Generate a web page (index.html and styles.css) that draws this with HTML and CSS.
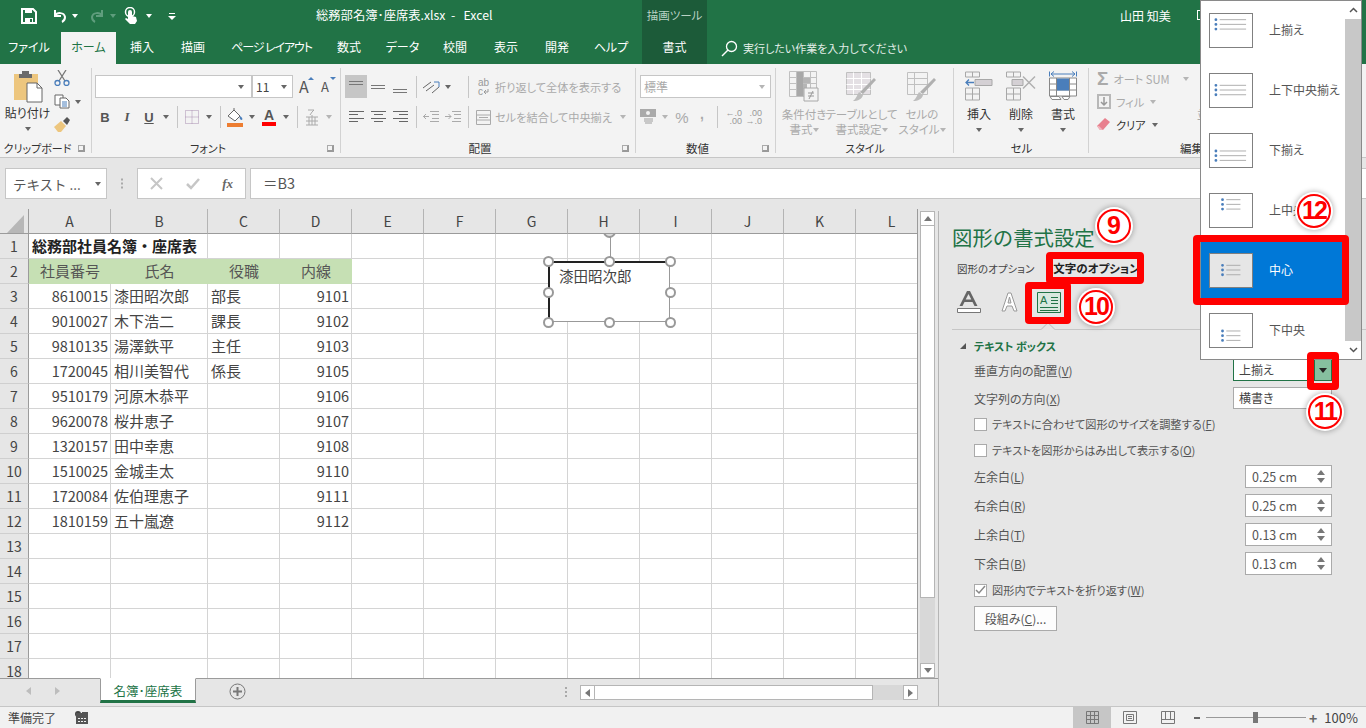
FILE: index.html
```html
<!DOCTYPE html>
<html lang="ja">
<head>
  <meta charset="UTF-8" />
  <title>総務部名簿・座席表.xlsx - Excel</title>
  <link rel="stylesheet" href="styles.css">
</head>
<body>
<div class="app">

  <div class="titlebar">
    <div class="qat">
      <svg class="q-save" width="16" height="16" viewBox="0 0 16 16"><path d="M1 1h11l3 3v11H1z" fill="none" stroke="#fff" stroke-width="2"/><path d="M4 1h7v4H4zM4 10h8v5H4z" fill="#fff"/><path d="M9 11h2v3H9z" fill="#217346"/></svg>
      <svg class="q-undo" width="16" height="16" viewBox="0 0 16 16"><path d="M4 2v6h6M4 8c2-4 9-4 10 1 0 2-1 4-3 5" fill="none" stroke="#fff" stroke-width="2"/></svg>
      <span class="caret white q-c1"></span>
      <svg class="q-redo" width="16" height="16" viewBox="0 0 16 16"><path d="M12 2v6H6M12 8c-2-4-9-4-10 1 0 2 1 4 3 5" fill="none" stroke="#5f9d7d" stroke-width="2"/></svg>
      <span class="caret dim q-c2"></span>
      <svg class="q-hand" width="14" height="18" viewBox="0 0 14 18"><circle cx="6" cy="5" r="4.5" fill="none" stroke="#fff" stroke-width="1.5"/><path d="M4 5a2 2 0 0 1 4 0v4l4 1 1 4-2 3H6l-5-5 1-1 2 1z" fill="#fff"/></svg>
      <span class="caret white q-c3"></span>
      <svg class="q-more" width="8" height="8" viewBox="0 0 8 8"><path d="M1 1h6v1H1zM0 4h8L4 8z" fill="#fff"/></svg>
    </div>
    <div class="doc-title">総務部名簿･座席表.xlsx&nbsp;&nbsp;-&nbsp;&nbsp;&nbsp;Excel</div>
    <div class="tool-tag">描画ツール</div>
    <div class="user">山田 知美</div>
    <div class="acct"></div>
  </div>

  <div class="tabs">
    <span class="tab file">ファイル</span>
    <span class="tab on">ホーム</span>
    <span class="tab">挿入</span>
    <span class="tab">描画</span>
    <span class="tab narrow">ページ レイアウト</span>
    <span class="tab">数式</span>
    <span class="tab">データ</span>
    <span class="tab">校閲</span>
    <span class="tab">表示</span>
    <span class="tab">開発</span>
    <span class="tab">ヘルプ</span>
    <span class="tab ctx">書式</span>
    <span class="tell">
      <svg width="17" height="17" viewBox="0 0 17 17"><circle cx="10.500" cy="6.500" r="5" fill="none" stroke="#fff" stroke-width="1.3"/><path d="M7 10l-6 6" stroke="#fff" stroke-width="1.5"/></svg>
      実行したい作業を入力してください
    </span>
  </div>

  <div class="ribbon">
    <section class="group g-clip">
      <div class="g-body clip-body">
        <div class="paste">
          <svg width="30" height="33" viewBox="0 0 30 33"><path d="M1 4h24v26H1z" fill="#edc67e"/><path d="M6 4h3V1h7v3h3v4H6z" fill="#6b6b6b"/><path d="M14 13h10l5 5v14H14z" fill="#fff" stroke="#666"/><path d="M24 13v5h5" fill="none" stroke="#666"/></svg>
          <span class="paste-label">貼り付け</span>
          <span class="caret"></span>
        </div>
        <div class="clip-col">
          <svg width="16" height="16" viewBox="0 0 16 16"><path d="M4 0l7 11M12 0L5 11" stroke="#777" stroke-width="1.300" fill="none"/><circle cx="3.500" cy="13" r="2.500" fill="none" stroke="#4a7ebb" stroke-width="1.300"/><circle cx="12.500" cy="13" r="2.500" fill="none" stroke="#4a7ebb" stroke-width="1.300"/></svg>
          <div class="clip-copy">
            <svg width="16" height="15" viewBox="0 0 16 15"><path d="M1 1h8v10H1z" fill="#fff" stroke="#666"/><path d="M6 4h6l3 3v7H6z" fill="#fff" stroke="#666"/><path d="M8 8h5M8 10h5M8 12h5" stroke="#4a7ebb"/></svg>
            <span class="caret"></span>
          </div>
          <svg width="16" height="15" viewBox="0 0 16 15"><path d="M0 10l7-6 5 5-5 6H4z" fill="#edc67e"/><path d="M9 4l4-4 3 3-3 5z" fill="#555"/></svg>
        </div>
      </div>
      <div class="g-label lx">クリップボード<span class="launcher"></span></div>
    </section>

    <section class="group g-font">
      <div class="g-body">
        <div class="row top">
          <div class="combo font-name"><span class="caret"></span></div>
          <div class="combo font-size"><span>11</span><span class="caret"></span></div>
          <span class="grow-a">A<i class="tri up"></i></span>
          <span class="grow-a small">A<i class="tri down"></i></span>
        </div>
        <div class="row second">
          <span class="tool b">B</span>
          <span class="tool i">I</span>
          <span class="tool u">U</span>
          <span class="slot"><span class="caret"></span></span>
          <span class="sep"></span>
          <span class="tool"><svg width="14" height="14" viewBox="0 0 14 14"><path d="M.5.500h13v13H.5zM7 .5v13M.5 7h13" fill="none" stroke="#a98fb0" stroke-dasharray="1 1"/></svg></span>
          <span class="slot"><span class="caret"></span></span>
          <span class="sep"></span>
          <span class="tool"><svg width="18" height="19" viewBox="0 0 18 19"><path d="M2 8l6-6 6 6-5 5z" fill="#fff" stroke="#666"/><path d="M8 2V0" stroke="#666"/><path d="M14 8c2 1 3 3 2 4-2 0-3-2-2-4z" fill="#4a7ebb"/><path d="M1 15h16v4H1z" fill="#ed7d31"/></svg></span>
          <span class="slot"><span class="caret"></span></span>
          <span class="tool"><span class="font-color">A</span></span>
          <span class="slot"><span class="caret"></span></span>
          <span class="sep"></span>
          <span class="tool"><svg width="14" height="17" viewBox="0 0 14 17"><path d="M3 1h6L7 3M7 3L5 6" stroke="#aaa" fill="none"/><path d="M1 8h12M1 12h12M1 16h12M4 8v8M10 8v8M7 6v10" stroke="#aaa" fill="none"/></svg></span>
          <span class="slot"><span class="caret off"></span></span>
        </div>
      </div>
      <div class="g-label lx">フォント<span class="launcher"></span></div>
    </section>

    <section class="group g-align">
      <div class="g-body">
        <div class="row top">
          <div class="cluster">
            <span class="tool active"><svg width="14" height="14" viewBox="0 0 14 14"><path d="M0 1.500h14M0 4.500h14" stroke="#777"/></svg></span>
            <span class="tool"><svg width="14" height="14" viewBox="0 0 14 14"><path d="M0 5.500h14M0 8.500h14" stroke="#777"/></svg></span>
            <span class="tool"><svg width="14" height="14" viewBox="0 0 14 14"><path d="M0 9.500h14M0 12.500h14" stroke="#777"/></svg></span>
            <span class="sep"></span>
            <span class="tool"><svg width="18" height="14" viewBox="0 0 18 14"><path d="M1 8l8-6M4 11l8-6M10 13l7-6" stroke="#666" fill="none"/><path d="M12 2h5v5" stroke="#4a7ebb" fill="none"/></svg></span>
            <span class="slot"><span class="caret"></span></span>
          </div>
          <span class="sep"></span>
          <span class="textbtn"><span class="wrap-ico">ab<br>c<svg width="6" height="6" viewBox="0 0 6 6"><path d="M5 0v3H1M3 1L1 3l2 2" fill="none" stroke="#999"/></svg></span>折り返して全体を表示する</span>
        </div>
        <div class="row second">
          <div class="cluster">
            <span class="tool"><svg width="15" height="12" viewBox="0 0 15 12"><path d="M0 .5h15M0 3.500h9M0 7.500h15M0 10.500h9" stroke="#666"/></svg></span>
            <span class="tool"><svg width="15" height="12" viewBox="0 0 15 12"><path d="M0 .5h15M3 3.500h9M0 7.500h15M3 10.500h9" stroke="#666"/></svg></span>
            <span class="tool"><svg width="15" height="12" viewBox="0 0 15 12"><path d="M0 .5h15M6 3.500h9M0 7.500h15M6 10.500h9" stroke="#666"/></svg></span>
            <span class="sep"></span>
            <span class="tool"><svg width="16" height="12" viewBox="0 0 16 12"><path d="M7 .5h9M9 3.500h7M9 7.500h7M7 10.500h9" stroke="#aaa"/><path d="M6 5.500H0M3 3L.5 5.500 3 8" fill="none" stroke="#aaa"/></svg></span>
            <span class="tool"><svg width="16" height="12" viewBox="0 0 16 12"><path d="M7 .5h9M9 3.500h7M9 7.500h7M7 10.500h9" stroke="#aaa"/><path d="M0 5.500h6M3.500 3L6 5.500 3.500 8" fill="none" stroke="#aaa"/></svg></span>
          </div>
          <span class="sep"></span>
          <span class="textbtn merge"><svg width="15" height="15" viewBox="0 0 15 15"><path d="M.5.500h14v14H.5zM.5 5h14M.5 10h14" fill="#f3f3f3" stroke="#aaa"/><path d="M3 7.500h9" stroke="#aaa"/></svg>セルを結合して中央揃え<span class="caret off"></span></span>
        </div>
      </div>
      <div class="g-label lx">配置<span class="launcher"></span></div>
    </section>

    <section class="group g-num">
      <div class="g-body">
        <div class="row top">
          <div class="combo num-format">標準<span class="caret off"></span></div>
        </div>
        <div class="row second">
          <span class="tool money"><svg width="16" height="16" viewBox="0 0 16 16"><path d="M0 0h16v8H0z" fill="#aaa"/><circle cx="8" cy="4" r="2" fill="#f3f3f3"/><path d="M4 10h9M4 12h9M5 14h7" stroke="#bbb" stroke-width="1.500"/></svg></span>
          <span class="slot"><span class="caret off"></span></span>
          <span class="tool pct">%</span>
          <span class="tool comma">,</span>
          <span class="sep"></span>
          <span class="tool dec">←.0<br>.00</span>
          <span class="tool dec">.00<br>→.0</span>
        </div>
      </div>
      <div class="g-label lx">数値<span class="launcher"></span></div>
    </section>

    <section class="group g-style">
      <div class="g-body bigs">
        <div class="big w56">
          <svg width="30" height="31" viewBox="0 0 30 31"><path d="M.5.500h27v25H.5zM.5 6.500h27M.5 12.500h27M.5 18.500h27M7.500.5v25M14.500.5v25M21.500.5v25" fill="#f3f3f3" stroke="#c0c0c0"/><path d="M8 1h6v24H8z" fill="#a8a8a8"/><path d="M14 7h7v5h-7zM14 13h4v5h-4z" fill="#b5b5b5"/><path d="M15 17h14v13H15z" fill="#f3f3f3" stroke="#a8a8a8"/><path d="M19 22h6M19 25h6M24 20l-4 8" stroke="#999" fill="none"/></svg>
          <span class="big-text off">条件付き<br>書式<i class="caret off"></i></span>
        </div>
        <div class="big w59">
          <svg width="31" height="31" viewBox="0 0 31 31"><path d="M.5 1.500h24v22H.5z" fill="#e4e0e4" stroke="#c0c0c0"/><path d="M.5 7.500h24M.5 13.500h24M.5 18.500h24M7.500 1.500v22M15.500 1.500v22" stroke="#fff"/><path d="M30 9L17 23l-3-2L28 7z" fill="#b0b0b0"/><path d="M13 21l4 3c-1 4-5 6-10 6 3-2 4-6 6-9z" fill="#bdbdbd"/></svg>
          <span class="big-text off">テーブルとして<br>書式設定<i class="caret off"></i></span>
        </div>
        <div class="big w62">
          <svg width="30" height="31" viewBox="0 0 30 31"><path d="M.5 1.500h20v22H.5zM.5 7.500h20M.5 13.500h20M7.500 1.500v22" fill="#f3f3f3" stroke="#c0c0c0"/><path d="M29 9L16 23l-3-2L27 7z" fill="#b0b0b0"/><path d="M12 21l4 3c-1 4-5 6-10 6 3-2 4-6 6-9z" fill="#bdbdbd"/></svg>
          <span class="big-text off">セルの<br>スタイル<i class="caret off"></i></span>
        </div>
      </div>
      <div class="g-label">スタイル</div>
    </section>

    <section class="group g-cell">
      <div class="g-body bigs">
        <div class="big w42">
          <svg width="28" height="30" viewBox="0 0 28 30"><path d="M.5.500h14v5H.5zM7.500.5v5M.5 16.500h14v12H.5zM.5 22.500h14M7.500 16.500v12" fill="none" stroke="#a8a8a8"/><path d="M10 8h17v6H10z" fill="#d4d0d4" stroke="#a8a8a8"/><path d="M9 11H1M4 8l-3 3 3 3" fill="none" stroke="#4a7ebb" stroke-width="1.300"/></svg>
          <span class="big-text">挿入<br><i class="caret"></i></span>
        </div>
        <div class="big w42">
          <svg width="30" height="30" viewBox="0 0 30 30"><path d="M.5.500h14v5H.5zM7.500.5v5M.5 16.500h14v12H.5zM.5 22.500h14M7.500 16.500v12" fill="none" stroke="#a8a8a8"/><path d="M6 8h11v6H6z" fill="#d4d0d4" stroke="#a8a8a8"/><path d="M17 5l12 12M29 5L17 17" stroke="#b0b0b0" stroke-width="1.500"/></svg>
          <span class="big-text">削除<br><i class="caret"></i></span>
        </div>
        <div class="big w42">
          <svg width="28" height="30" viewBox="0 0 28 30"><path d="M.5 0v5M27.500 0v5M2 2.500h24M5 0L2 2.500 5 5M23 0l3 2.500L23 5" fill="none" stroke="#4a7ebb"/><path d="M.5 6.500h27v18H.5zM.5 12.500h27M.5 18.500h27M7.500 6.500v18M20.500 6.500v18" fill="#fff" stroke="#888"/><path d="M8 7h12v12H8z" fill="#4a7ebb"/><path d="M1 25h9l2 3H3zM13 25h8l-2 3h-4z" fill="#fff" stroke="#888"/></svg>
          <span class="big-text">書式<br><i class="caret"></i></span>
        </div>
      </div>
      <div class="g-label">セル</div>
    </section>

    <section class="group g-edit">
      <div class="g-body edit-body">
        <div class="edit-col">
          <div class="edit-row off sum"><span class="sigma">Σ</span>オート SUM<span class="caret off"></span></div>
          <div class="edit-row off"><svg width="14" height="15" viewBox="0 0 14 15"><path d="M0 0h14v15H0z" fill="#b8b8b8"/><path d="M2 2h10v11H2z" fill="#f3f3f3"/><path d="M7 3v8M4 8l3 3 3-3" fill="none" stroke="#999" stroke-width="1.500"/></svg>フィル<span class="caret off"></span></div>
          <div class="edit-row"><svg width="14" height="13" viewBox="0 0 14 13"><path d="M0 8l8-8 5 4-7 8H3z" fill="#e8808e"/><path d="M3 12h3L2 8 0 8z" fill="#f2b5bd"/></svg>クリア<span class="caret"></span></div>
        </div>
        <span class="big-text off stub">並べ替えと</span>
      </div>
      <div class="g-label left">編集</div>
    </section>
  </div>

  <div class="formula">
    <div class="namebox">テキスト ...<span class="caret"></span></div>
    <div class="grip"></div>
    <div class="fx-box">
      <svg width="13" height="13" viewBox="0 0 13 13"><path d="M1 1l11 11M12 1L1 12" stroke="#c6c6c6" stroke-width="2"/></svg>
      <svg width="14" height="12" viewBox="0 0 14 12"><path d="M1 6l4 4 8-9" fill="none" stroke="#c6c6c6" stroke-width="2.500"/></svg>
      <span class="fx">fx</span>
    </div>
    <div class="formula-input">＝B3</div>
  </div>

  <div class="work">
    <div class="sheet">
      <div class="sheet-main">
        <div class="grid">
          <table class="cells">
            <colgroup><col class="c-head"><col class="c-a"><col class="c-b"><col class="c-n"><col class="c-n"><col class="c-n"><col class="c-n"><col class="c-n"><col class="c-n"><col class="c-n"><col class="c-n"><col class="c-n"><col class="c-n"></colgroup>
            <thead>
              <tr><th class="corner"><svg width="18" height="18" viewBox="0 0 18 18"><path d="M17 0v18H0z" fill="#b7b7b7"/></svg></th><th>A</th><th>B</th><th>C</th><th>D</th><th>E</th><th>F</th><th>G</th><th>H</th><th>I</th><th>J</th><th>K</th><th>L</th></tr>
            </thead>
            <tbody>
              <tr><th>1</th><td colspan="2" class="title-cell">総務部社員名簿・座席表</td><td></td><td></td><td></td><td></td><td></td><td></td><td></td><td></td><td></td><td></td></tr>
              <tr><th>2</th><td class="hd">社員番号</td><td class="hd">氏名</td><td class="hd">役職</td><td class="hd">内線</td><td></td><td></td><td></td><td></td><td></td><td></td><td></td><td></td></tr>
              <tr><th>3</th><td class="num">8610015</td><td>漆田昭次郎</td><td>部長</td><td class="num">9101</td><td></td><td></td><td></td><td></td><td></td><td></td><td></td><td></td></tr>
              <tr><th>4</th><td class="num">9010027</td><td>木下浩二</td><td>課長</td><td class="num">9102</td><td></td><td></td><td></td><td></td><td></td><td></td><td></td><td></td></tr>
              <tr><th>5</th><td class="num">9810135</td><td>湯澤鉄平</td><td>主任</td><td class="num">9103</td><td></td><td></td><td></td><td></td><td></td><td></td><td></td><td></td></tr>
              <tr><th>6</th><td class="num">1720045</td><td>相川美智代</td><td>係長</td><td class="num">9105</td><td></td><td></td><td></td><td></td><td></td><td></td><td></td><td></td></tr>
              <tr><th>7</th><td class="num">9510179</td><td>河原木恭平</td><td></td><td class="num">9106</td><td></td><td></td><td></td><td></td><td></td><td></td><td></td><td></td></tr>
              <tr><th>8</th><td class="num">9620078</td><td>桜井恵子</td><td></td><td class="num">9107</td><td></td><td></td><td></td><td></td><td></td><td></td><td></td><td></td></tr>
              <tr><th>9</th><td class="num">1320157</td><td>田中幸恵</td><td></td><td class="num">9108</td><td></td><td></td><td></td><td></td><td></td><td></td><td></td><td></td></tr>
              <tr><th>10</th><td class="num">1510025</td><td>金城圭太</td><td></td><td class="num">9110</td><td></td><td></td><td></td><td></td><td></td><td></td><td></td><td></td></tr>
              <tr><th>11</th><td class="num">1720084</td><td>佐伯理恵子</td><td></td><td class="num">9111</td><td></td><td></td><td></td><td></td><td></td><td></td><td></td><td></td></tr>
              <tr><th>12</th><td class="num">1810159</td><td>五十嵐遼</td><td></td><td class="num">9112</td><td></td><td></td><td></td><td></td><td></td><td></td><td></td><td></td></tr>
              <tr><th>13</th><td></td><td></td><td></td><td></td><td></td><td></td><td></td><td></td><td></td><td></td><td></td><td></td></tr>
              <tr><th>14</th><td></td><td></td><td></td><td></td><td></td><td></td><td></td><td></td><td></td><td></td><td></td><td></td></tr>
              <tr><th>15</th><td></td><td></td><td></td><td></td><td></td><td></td><td></td><td></td><td></td><td></td><td></td><td></td></tr>
              <tr><th>16</th><td></td><td></td><td></td><td></td><td></td><td></td><td></td><td></td><td></td><td></td><td></td><td></td></tr>
              <tr><th>17</th><td></td><td></td><td></td><td></td><td></td><td></td><td></td><td></td><td></td><td></td><td></td><td></td></tr>
              <tr><th>18</th><td></td><td></td><td></td><td></td><td></td><td></td><td></td><td></td><td></td><td></td><td></td><td></td></tr>
            </tbody>
          </table>
          <div class="shape-layer">
            <div class="shape">
              <span class="shape-text">漆田昭次郎</span>
              <span class="rot-line"></span>
              <i class="h rot"></i>
              <i class="h tl"></i><i class="h tc"></i><i class="h tr"></i>
              <i class="h ml"></i><i class="h mr"></i>
              <i class="h bl"></i><i class="h bc"></i><i class="h br"></i>
            </div>
          </div>
        </div>
        <div class="vscroll">
          <span class="sb-btn"><i class="tri up grey"></i></span>
          <span class="sb-thumb"></span>
          <span class="sb-track"></span>
          <span class="sb-btn"><i class="tri down grey"></i></span>
        </div>
      </div>
      <div class="sheet-tabs">
        <div class="tab-nav"><i class="tri left pale"></i><i class="tri right pale"></i></div>
        <div class="sheet-tab">名簿･座席表</div>
        <svg class="add-sheet" width="17" height="17" viewBox="0 0 17 17"><circle cx="8.500" cy="8.500" r="7.500" fill="none" stroke="#777"/><path d="M8.500 4v9M4 8.500h9" stroke="#777" stroke-width="2"/></svg>
        <div class="grip small"></div>
        <div class="hscroll">
          <span class="sb-btn"><i class="tri left grey"></i></span>
          <span class="hs-thumb"></span>
          <span class="hs-track"></span>
          <span class="sb-btn"><i class="tri right grey"></i></span>
        </div>
      </div>
    </div>

    <aside class="panel">
      <h2 class="panel-title">図形の書式設定</h2>
      <div class="panel-tabs"><span>図形のオプション</span><strong>文字のオプション</strong></div>
      <div class="panel-icons">
        <svg width="24" height="22" viewBox="0 0 24 22"><path d="M2.500 15L10 0h3l7.500 15h-3l-2-4H7.500l-2 4zM8.700 8.500h5.600L11.500 3z" fill="#666"/><path d="M.5 17.500h23v4H.5z" fill="#fff" stroke="#777"/></svg>
        <svg class="ic-outline" width="17" height="22" viewBox="0 0 17 22"><path d="M1 20L7 2h3l6 18h-3l-2-5H6l-2 5zM7 12h3L8.500 6z" fill="#fff" stroke="#999"/></svg>
        <svg class="ic-box" width="24" height="21" viewBox="0 0 24 21"><path d="M.5.500h23v20H.5z" fill="#d9e8de" stroke="#217346"/><path d="M3 18.500h18M3 15.500h18M14 5.500h7M14 8.500h7M14 11.500h7" stroke="#217346"/><text x="3" y="12" class="ic-a">A</text></svg>
      </div>
      <div class="panel-rule"><span class="notch"></span></div>
      <div class="section-head"><i class="corner-tri"></i>テキスト ボックス</div>

      <div class="field">
        <label>垂直方向の配置(<u>V</u>)</label>
        <div class="pick open">上揃え<span class="pick-btn"><i class="tri down dark"></i></span></div>
      </div>
      <div class="field">
        <label>文字列の方向(<u>X</u>)</label>
        <div class="pick">横書き</div>
      </div>
      <div class="check"><span class="box"></span>テキストに合わせて図形のサイズを調整する(<u>F</u>)</div>
      <div class="check"><span class="box"></span>テキストを図形からはみ出して表示する(<u>O</u>)</div>
      <div class="field spin-row first"><label>左余白(<u>L</u>)</label><div class="spin">0.25 cm<span class="spin-btn"><i class="tri up grey"></i><i class="tri down grey"></i></span></div></div>
      <div class="field spin-row"><label>右余白(<u>R</u>)</label><div class="spin">0.25 cm<span class="spin-btn"><i class="tri up grey"></i><i class="tri down grey"></i></span></div></div>
      <div class="field spin-row"><label>上余白(<u>T</u>)</label><div class="spin">0.13 cm<span class="spin-btn"><i class="tri up grey"></i><i class="tri down grey"></i></span></div></div>
      <div class="field spin-row"><label>下余白(<u>B</u>)</label><div class="spin">0.13 cm<span class="spin-btn"><i class="tri up grey"></i><i class="tri down grey"></i></span></div></div>
      <div class="check"><span class="box"><svg width="11" height="10" viewBox="0 0 11 10"><path d="M1 5l3 3 6-7" fill="none" stroke="#888" stroke-width="1.500"/></svg></span>図形内でテキストを折り返す(<u>W</u>)</div>
      <button class="columns-btn">段組み(<u>C</u>)...</button>
    </aside>
  </div>

  <div class="statusbar">
    <span class="ready">準備完了</span>
    <svg class="macro" width="14" height="13" viewBox="0 0 14 13"><circle cx="3" cy="3" r="3" fill="#444"/><path d="M1 5h12V1H7v1H1zM1 5v8h12V5z" fill="#555"/><path d="M3 7h2v1H3zM6 7h2v1H6zM9 7h2v1H9zM3 10h2v1H3zM6 10h2v1H6zM9 10h2v1H9z" fill="#f1f1f1"/></svg>
    <div class="views">
      <span class="view on"><svg width="13" height="13" viewBox="0 0 13 13"><path d="M.5.500h12v12H.5zM.5 4.500h12M.5 8.500h12M4.500.5v12M8.500.5v12" fill="none" stroke="#777"/></svg></span>
      <span class="view"><svg width="14" height="13" viewBox="0 0 14 13"><path d="M.5.500h13v12H.5zM3.500 3.500h7v6h-7zM5 5.500h4M5 7.500h4" fill="none" stroke="#777"/></svg></span>
      <span class="view"><svg width="14" height="13" viewBox="0 0 14 13"><path d="M.5.500h13v12H.5zM.5 8.500h13M4.500.5v8M9.500.5v8" fill="none" stroke="#777"/></svg></span>
    </div>
    <div class="zoom-ctl">
      <span class="zoom-minus"></span>
      <span class="zoom-track"><i class="zoom-thumb"></i></span>
      <span class="zoom-plus">+</span>
      <span class="zoom-val">100%</span>
    </div>
  </div>

  <!-- dropdown and the red call-outs lie over the window -->
  <div class="dropdown">
    <ul class="dd-list">
      <li><svg class="dd-ico" width="44" height="35" viewBox="0 0 44 35"><use href="#lines-wide" y="6"/></svg>上揃え</li>
      <li><svg class="dd-ico" width="44" height="35" viewBox="0 0 44 35"><use href="#lines-wide" y="12"/></svg>上下中央揃え</li>
      <li><svg class="dd-ico" width="44" height="35" viewBox="0 0 44 35"><use href="#lines-wide" y="18"/></svg>下揃え</li>
      <li><svg class="dd-ico" width="44" height="35" viewBox="0 0 44 35"><use href="#lines-narrow" y="6"/></svg>上中央</li>
      <li class="sel"><svg class="dd-ico" width="44" height="35" viewBox="0 0 44 35"><use href="#lines-narrow" y="12"/></svg>中心</li>
      <li><svg class="dd-ico" width="44" height="35" viewBox="0 0 44 35"><use href="#lines-narrow" y="18"/></svg>下中央</li>
    </ul>
    <div class="dd-scroll">
      <span class="dd-btn"><svg width="9" height="6" viewBox="0 0 9 6"><path d="M1 5l3.500-3.500L8 5" fill="none" stroke="#555" stroke-width="1.500"/></svg></span>
      <span class="dd-thumb"></span>
      <span class="dd-btn"><svg width="9" height="6" viewBox="0 0 9 6"><path d="M1 1l3.500 3.500L8 1" fill="none" stroke="#555" stroke-width="1.500"/></svg></span>
    </div>
  </div>
  <svg class="defs" width="0" height="0">
    <g id="lines-wide"><path d="M6 0v.01M6 5v.01M6 10v.01" stroke="#4a7ebb" stroke-width="3" stroke-linecap="round"/><path d="M10 0h28M10 5h28M10 10h28" stroke="#aaa"/></g>
    <g id="lines-narrow"><path d="M13 0v.01M13 5v.01M13 10v.01" stroke="#4a7ebb" stroke-width="3" stroke-linecap="round"/><path d="M17 0h15M17 5h15M17 10h15" stroke="#aaa"/></g>
  </svg>

  <span class="mark m-opt"></span>
  <span class="mark m-ico"></span>
  <span class="mark m-btn"></span>
  <span class="mark m-sel"></span>
  <span class="num-badge n9">9</span>
  <span class="num-badge n10">10</span>
  <span class="num-badge n11">11</span>
  <span class="num-badge n12">12</span>
</div>
</body>
</html>
```

FILE: styles.css
```css
* { box-sizing: border-box; }
html, body { margin: 0; height: 100%; overflow: hidden; }
body {
  font-family: "Noto Sans CJK JP", "Noto Sans", sans-serif;
  font-size: 12px;
  font-feature-settings: "palt";
  color: #444;
  background: #e6e6e6;
}
.app {
  position: relative;
  width: 1366px;
  height: 728px;
  display: flex;
  flex-direction: column;
  overflow: hidden;
}

/* small shared bits */
.caret {
  display: inline-block;
  width: 0;
  height: 0;
  border: 3.5px solid transparent;
  border-top: 4px solid #666;
  border-bottom: 0;
}
.caret.off { border-top-color: #b5b5b5; }
.caret.white { border-top-color: #fff; }
.caret.dim { border-top-color: #5f9d7d; }
.tri { display: block; width: 0; height: 0; border: 4px solid transparent; }
.tri.up { border-top: 0; border-bottom: 5px solid #4a7ebb; }
.tri.down { border-bottom: 0; border-top: 5px solid #4a7ebb; }
.tri.left { border-left: 0; border-right: 5px solid #777; }
.tri.right { border-right: 0; border-left: 5px solid #777; }
.tri.grey.up { border-bottom-color: #777; }
.tri.grey.down { border-top-color: #777; }
.tri.down.dark { border-top-color: #222; }
.tri.pale.left { border-right-color: #bdbdbd; }
.tri.pale.right { border-left-color: #bdbdbd; }

/* title bar */
.titlebar {
  height: 32px;
  background: #217346;
  color: #fff;
  display: flex;
  flex: none;
}
.qat { width: 316px; display: flex; align-items: center; padding-left: 21px; }
.q-undo { margin-left: 14px; }
.q-c1 { margin-left: 5px; }
.q-redo { margin-left: 12px; }
.q-c2 { margin-left: 4px; }
.q-hand { margin-left: 8px; }
.q-c3 { margin-left: 8px; }
.q-more { margin-left: 16px; }
.doc-title { width: 326px; line-height: 31px; font-size: 12.3px; white-space: nowrap; }
.tool-tag {
  width: 65px;
  background: #1c5b39;
  color: #b9d2c4;
  text-align: center;
  line-height: 31px;
  font-size: 11.5px;
}
.user { margin-left: 413px; line-height: 31px; font-size: 12px; width: 77px; }
.acct { width: 13px; height: 10px; margin-top: 10px; border: 1px solid #fff; }

/* ribbon tabs */
.tabs {
  height: 32px;
  flex: none;
  background: #217346;
  color: #fff;
  display: grid;
  grid-template-columns: 58px 58px 52px 50px 107px 48px 59px 46px 56px 46px 62px 65px 1fr;
  line-height: 30px;
  text-align: center;
  font-size: 12px;
}
.tab.narrow { letter-spacing: -1.1px; white-space: nowrap; }
.tab.on { background: #f3f3f3; color: #217346; margin-left: 3px; }
.tab.ctx { background: #1c5b39; }
.tell { text-align: left; padding-left: 14px; display: flex; align-items: center; gap: 5px; font-size: 11px; color: #e3eee8; }

/* ribbon */
.ribbon {
  height: 94px;
  flex: none;
  background: #f3f3f3;
  border-bottom: 1px solid #c6c6c6;
  display: flex;
}
.group { position: relative; display: flex; flex-direction: column; height: 93px; }
.group::after {
  content: "";
  position: absolute;
  right: 0;
  top: 4px;
  bottom: 4px;
  width: 1px;
  background: #d2d2d2;
}
.g-clip { width: 92px; }
.g-font { width: 249px; }
.g-align { width: 295px; }
.g-num { width: 140px; }
.g-style { width: 178px; }
.g-cell { width: 135px; }
.g-edit { width: 277px; }
.g-edit::after { display: none; }
.g-body { height: 76px; }
.g-label {
  position: relative;
  text-align: center;
  font-size: 11.5px;
  line-height: 16px;
  color: #333;
}
.g-clip .g-label, .g-font .g-label, .g-style .g-label { font-size: 11px; }
.g-label.lx { padding-right: 17px; }
.g-label.left { text-align: left; padding-left: 91px; }
.launcher {
  position: absolute;
  right: 7px;
  top: 5px;
  width: 7px;
  height: 7px;
  border-left: 1px solid #aaa;
  border-top: 1px solid #aaa;
  border-right: 2px solid #999;
  border-bottom: 2px solid #999;
}
.row { display: flex; align-items: center; }
.row.top { height: 23px; margin-top: 11px; }
.row.second { height: 24px; margin-top: 7px; }
.tool { width: 22px; height: 23px; flex: none; display: flex; align-items: center; justify-content: center; }
.tool.active { background: #c6c6c6; }
.slot { width: 12px; flex: none; display: flex; justify-content: center; align-items: center; }
.sep { width: 1px; height: 22px; background: #c6c6c6; margin: 0 3px 0 5px; flex: none; }

.clip-body { display: flex; padding-left: 5px; }
.paste { width: 45px; display: flex; flex-direction: column; align-items: center; padding-top: 6px; }
.paste-label { margin-top: 2px; font-size: 12px; line-height: 16px; white-space: nowrap; color: #333; }
.paste .caret { margin-top: 6px; }
.clip-col { margin-left: 4px; padding-top: 6px; display: flex; flex-direction: column; gap: 8px; }
.clip-copy { display: flex; align-items: center; gap: 5px; width: 30px; }

.g-font .g-body { padding-left: 2px; }
.g-font .row.top { padding-left: 1px; }
.combo {
  height: 23px;
  background: #fff;
  border: 1px solid #c6c6c6;
  display: flex;
  align-items: center;
  justify-content: space-between;
  padding: 0 5px 0 3px;
  font-size: 12px;
}
.font-name { width: 157px; justify-content: flex-end; padding-right: 7px; }
.font-size { width: 41px; }
.grow-a { position: relative; margin-left: 6px; width: 14px; font-size: 16px; line-height: 23px; color: #555; }
.grow-a.small { margin-left: 8px; font-size: 13px; }
.grow-a .tri { position: absolute; left: 9px; top: 2px; border-width: 3px; }
.grow-a .tri.up { border-bottom-width: 3px; }
.grow-a .tri.down { border-top-width: 3px; }
.b { font: bold 13px "Liberation Sans", sans-serif; color: #555; }
.i { font: italic bold 13px "Liberation Serif", serif; color: #555; }
.u { font: bold 13px "Liberation Sans", sans-serif; color: #555; text-decoration: underline; }
.font-color {
  font: bold 14px/14px "Liberation Sans", sans-serif;
  color: #555;
  border-bottom: 4px solid #f00;
  padding: 0 2px;
}

.g-align .g-body { padding-left: 4px; }
.cluster { width: 123px; flex: none; display: flex; align-items: center; }
.cluster + .sep { margin: 0 9px 0 0; }
.textbtn { display: flex; align-items: center; font-size: 11.2px; color: #aaa; white-space: nowrap; }
.wrap-ico { width: 17px; font: 10px/9px "Liberation Sans", sans-serif; color: #999; }
.merge { margin-left: -2px; }
.merge svg { margin-right: 4px; }
.merge .caret { margin-left: 8px; }

.g-num .g-body { padding-left: 4px; }
.num-format { width: 131px; color: #aaa; padding-left: 3px; }
.money { margin-left: -3px; }
.pct { font: 15px "Liberation Sans", sans-serif; color: #aaa; margin-left: 2px; width: 18px; }
.comma { font: bold 14px "Liberation Sans", sans-serif; color: #aaa; padding-bottom: 6px; }
.g-num .sep { margin: 0 4px 0 4px; }
.dec { font: 9px/8px "Liberation Sans", sans-serif; color: #999; text-align: right; width: 20px; display: block; padding-top: 3px; }

.bigs { display: flex; padding-top: 6px; }
.g-cell .bigs { padding-left: 4px; }
.big { display: flex; flex-direction: column; align-items: center; }
.big svg { height: 33px; }
.w42 { width: 42px; }
.w56 { width: 56px; }
.w59 { width: 59px; }
.w62 { width: 62px; }
.big-text { margin-top: 4px; text-align: center; line-height: 14.5px; font-size: 12px; color: #333; white-space: nowrap; }
.big-text.off { color: #aaa; font-size: 11.5px; }
.big-text .caret { margin-left: 3px; vertical-align: middle; }
.big-text br + .caret { margin-left: 0; }

.edit-body { display: flex; padding: 3px 0 0 8px; }
.edit-col { width: 100px; }
.edit-row { height: 23px; display: flex; align-items: center; gap: 5px; font-size: 11.2px; color: #333; white-space: nowrap; }
.edit-row.off { color: #aaa; }
.edit-row .caret { margin-left: 1px; }
.edit-row.sum .caret { margin-left: 8px; }
.sigma { font: bold 19px/19px "Liberation Sans", sans-serif; color: #aaa; }
.stub { margin-top: 40px; }

/* formula bar */
.formula {
  height: 51px;
  flex: none;
  padding: 10px 0 10px 5px;
  display: flex;
  background: #e6e6e6;
}
.namebox {
  width: 102px;
  background: #fff;
  border: 1px solid #c6c6c6;
  display: flex;
  align-items: center;
  justify-content: space-between;
  padding: 0 5px 0 7px;
  font-size: 13.5px;
  font-feature-settings: normal;
  color: #555;
  white-space: nowrap;
}
.grip {
  width: 30px;
  flex: none;
  background: radial-gradient(circle, #aaa 1px, transparent 1.5px) center / 4px 4px repeat-y;
  background-size: 4px 4px;
  margin: 9px 0;
}
.grip.small { margin: 7px 0 8px auto; width: 4px; }
.fx-box {
  width: 109px;
  background: #fff;
  border: 1px solid #c6c6c6;
  display: flex;
  align-items: center;
  justify-content: space-between;
  padding: 0 12px 0 12px;
}
.fx { font: italic bold 13px "Liberation Serif", serif; color: #666; }
.formula-input {
  flex: 1;
  margin-left: 4px;
  background: #fff;
  border: 1px solid #c6c6c6;
  border-right: 0;
  line-height: 28px;
  padding-left: 12px;
  font-size: 14.5px;
  color: #555;
}

/* sheet */
.work { flex: 1; display: flex; min-height: 0; }
.sheet { width: 938px; flex: none; display: flex; flex-direction: column; }
.sheet-main { height: 469px; flex: none; display: flex; }
.grid {
  position: relative;
  width: 918px;
  overflow: hidden;
  background: #fff;
  border-right: 1px solid #9b9b9b;
}
.cells { border-collapse: separate; border-spacing: 0; table-layout: fixed; width: 928px; }
.c-head { width: 29px; }
.c-a { width: 82px; }
.c-b { width: 97px; }
.c-n { width: 72px; }
.cells th {
  height: 25px;
  padding: 0;
  background: #e6e6e6;
  font-weight: 400;
  font-size: 14px;
  color: #444;
  border-right: 1px solid #b4b4b4;
  border-bottom: 1px solid #cfcfcf;
  text-align: center;
}
.cells thead th { border-bottom: 1px solid #9b9b9b; vertical-align: bottom; line-height: 23px; }
.cells tbody th { border-right-color: #9b9b9b; }
.cells thead th:first-child { border-right-color: #9b9b9b; }
.corner svg { display: block; margin: 4px 0 0 7px; }
.cells td {
  height: 25px;
  padding: 0 2px 0 3px;
  border-right: 1px solid #d4d4d4;
  border-bottom: 1px solid #d4d4d4;
  font-size: 15px;
  color: #444;
  white-space: nowrap;
  overflow: hidden;
  line-height: 20px;
  font-feature-settings: normal;
}
.cells td.num { text-align: right; font-size: 14.5px; }
.cells td.hd { background: #c6e0b4; border-color: #c6e0b4; text-align: center; color: #555; }
.cells td.title-cell { font-weight: 700; color: #222; }

.shape-layer { position: absolute; left: 0; right: 0; top: 25px; bottom: 0; overflow: hidden; }
.shape {
  position: absolute;
  left: 548px;
  top: 27px;
  width: 122px;
  height: 61px;
  background: #fff;
  border: 1px solid #999;
  border-top: 2px solid #222;
  border-left: 2px solid #222;
}
.shape-text { position: absolute; left: 9px; top: 3px; font-size: 14.5px; line-height: 20px; color: #444; white-space: nowrap; font-feature-settings: normal; }
.rot-line { position: absolute; left: 60px; top: -29px; width: 1px; height: 28px; background: #999; }
.h {
  position: absolute;
  width: 11px;
  height: 11px;
  border-radius: 50%;
  background: #fff;
  border: 2px solid #999;
}
.h.tl { left: -7px; top: -7px; }
.h.tc { left: 54px; top: -7px; }
.h.tr { left: 115px; top: -7px; }
.h.ml { left: -7px; top: 24px; }
.h.mr { left: 115px; top: 24px; }
.h.bl { left: -7px; top: 54px; }
.h.bc { left: 54px; top: 54px; }
.h.br { left: 115px; top: 54px; }
.h.rot { left: 53px; top: -38px; width: 13px; height: 13px; background: #ddd; border-color: #999; }

.vscroll { width: 20px; display: flex; flex-direction: column; padding: 2px 3px 0 2px; }
.sb-btn {
  width: 15px;
  height: 15px;
  flex: none;
  background: #fff;
  border: 1px solid #b5b5b5;
  display: flex;
  align-items: center;
  justify-content: center;
}
.sb-thumb { height: 372px; background: #fff; border: 1px solid #b5b5b5; border-top: 0; flex: none; }
.sb-track { flex: 1; background: #d8d8d8; }
.sheet-tabs {
  flex: 1;
  display: flex;
  border-top: 1px solid #9b9b9b;
  padding-right: 20px;
  background: #e6e6e6;
}
.tab-nav { width: 100px; display: flex; align-items: center; gap: 24px; padding: 0 0 4px 26px; }
.sheet-tab {
  width: 96px;
  height: 25px;
  margin-top: -1px;
  background: #fff;
  border: 1px solid #9b9b9b;
  border-top-color: #fff;
  border-bottom: 3px solid #217346;
  color: #217346;
  text-align: center;
  font-size: 12.5px;
  line-height: 23px;
}
.add-sheet { margin: 4px 0 0 33px; }
.hscroll { margin: 6px 0 0 12px; width: 338px; height: 15px; display: flex; }
.hs-thumb { width: 278px; background: #fff; border: 1px solid #b5b5b5; border-left: 0; }
.hs-track { flex: 1; background: #d8d8d8; }

/* format panel */
.panel {
  flex: 1;
  margin-top: 2px;
  padding-left: 13px;
  border-left: 1px solid #b5b5b5;
  min-width: 0;
}
.panel-title {
  margin: 13px 0 0;
  font-size: 20.4px;
  font-weight: 400;
  line-height: 26px;
  color: #217346;
  font-feature-settings: normal;
}
.panel-tabs { display: flex; height: 20px; margin: 8px 0 0 5px; align-items: center; font-size: 10.5px; color: #444; }
.panel-tabs strong { margin-left: 19px; font-size: 11.5px; color: #222; }
.panel-icons { display: flex; align-items: center; height: 26px; margin: 11px 0 0 5px; }
.ic-outline { margin-left: 20px; }
.ic-box { margin-left: 19px; }
.ic-a { font: 11px "Liberation Sans", sans-serif; fill: #217346; }
.panel-rule { position: relative; height: 1px; margin-top: 14px; background: #c6c6c6; }
.notch {
  position: absolute;
  left: 91px;
  top: -5px;
  width: 10px;
  height: 10px;
  transform: rotate(45deg);
  background: #e6e6e6;
  border-left: 1px solid #c6c6c6;
  border-top: 1px solid #c6c6c6;
}
.section-head { height: 18px; margin: 7px 0 4px 22px; position: relative; font-weight: 700; font-size: 11px; color: #217346; line-height: 18px; }
.corner-tri {
  position: absolute;
  left: -14px;
  top: 6px;
  width: 0;
  height: 0;
  border: 3px solid transparent;
  border-right-color: #555;
  border-bottom-color: #555;
}
.field {
  margin: 0 0 6px 22px;
  width: 358px;
  height: 22px;
  display: flex;
  align-items: center;
  justify-content: space-between;
  font-size: 12px;
  color: #555;
}
.field + .check { margin-top: -4px; }
.pick {
  width: 99px;
  height: 22px;
  background: #fff;
  border: 1px solid #aaa;
  line-height: 20px;
  padding-left: 5px;
  position: relative;
  color: #444;
  font-size: 12px;
}
.pick.open { border-color: #217346; }
.pick-btn {
  position: absolute;
  right: -1px;
  top: -1px;
  width: 18px;
  height: 22px;
  background: #86bf9f;
  border: 1px solid #217346;
  display: flex;
  align-items: center;
  justify-content: center;
}
.check { height: 26px; margin-left: 22px; display: flex; align-items: center; font-size: 11.2px; color: #555; white-space: nowrap; }
.box {
  width: 13px;
  height: 13px;
  margin-right: 5px;
  background: #fff;
  border: 1px solid #aaa;
  display: flex;
  align-items: center;
  justify-content: center;
  flex: none;
}
.spin-row { height: 23px; }
.spin-row.first { margin-top: 2px; }
.spin {
  width: 87px;
  height: 23px;
  background: #fff;
  border: 1px solid #aaa;
  display: flex;
  align-items: center;
  justify-content: space-between;
  padding: 0 6px;
  color: #555;
  font-size: 12.5px;
  font-feature-settings: normal;
}
.spin-btn { display: flex; flex-direction: column; gap: 3px; }
.columns-btn {
  display: block;
  margin: 3px 0 0 22px;
  width: 83px;
  height: 25px;
  background: #fdfdfd;
  border: 1px solid #aaa;
  padding: 0;
  font: 12px "Noto Sans CJK JP", sans-serif;
  font-feature-settings: "palt";
  color: #555;
}

/* status bar */
.statusbar {
  height: 22px;
  flex: none;
  background: #f1f1f1;
  border-top: 1px solid #c6c6c6;
  display: flex;
  align-items: center;
  font-size: 12px;
  color: #444;
  position: relative;
}
.ready { margin-left: 8px; width: 48px; white-space: nowrap; }
.macro { margin-left: 19px; }
.views { margin-left: 984px; display: flex; height: 21px; }
.view { width: 38px; display: flex; align-items: center; justify-content: center; }
.view.on { background: #c6c6c6; }
.zoom-ctl { display: flex; align-items: center; margin-left: 7px; }
.zoom-minus { width: 6px; height: 2px; background: #666; }
.zoom-track { position: relative; width: 100px; height: 1px; margin-left: 6px; background: #999; }
.zoom-thumb { position: absolute; left: 47px; top: -5px; width: 5px; height: 11px; background: #777; }
.zoom-plus { margin-left: 3px; font-weight: 700; font-size: 14px; line-height: 14px; color: #666; }
.zoom-val { margin-left: 7px; font-size: 13px; color: #444; }

/* overlays */
.dropdown {
  position: absolute;
  left: 1200px;
  top: 0;
  width: 162px;
  height: 360px;
  background: #fff;
  border: 1px solid #8a8a8a;
  display: flex;
  overflow: hidden;
}
.dd-list { list-style: none; margin: 0; padding: 0; width: 144px; }
.dd-list li {
  height: 60px;
  display: flex;
  align-items: flex-start;
  padding: 12px 0 0 8px;
  font-size: 12px;
  line-height: 33px;
  color: #555;
  white-space: nowrap;
}
.dd-list li.sel { background: #0078d7; color: #fff; }
.dd-ico { margin-right: 16px; background: #fff; border: 1px solid #808080; flex: none; }
.sel .dd-ico { background: #e6e6e6; }
.dd-scroll { width: 16px; display: flex; flex-direction: column; }
.dd-btn { height: 18px; display: flex; align-items: center; justify-content: center; flex: none; background: #fff; }
.dd-thumb { flex: 1; background: #c8c8c8; }
.defs { position: absolute; }

.mark { position: absolute; border: 7px solid #f00; border-radius: 4px; }
.m-opt { left: 1046px; top: 252px; width: 98px; height: 32px; }
.m-ico { left: 1025px; top: 282px; width: 46px; height: 42px; }
.m-btn { left: 1307px; top: 352px; width: 32px; height: 38px; }
.m-sel { left: 1193px; top: 235px; width: 156px; height: 70px; }

.num-badge {
  position: absolute;
  width: 34px;
  height: 34px;
  border-radius: 50%;
  background: #fff;
  border: 2px solid #f00;
  box-shadow: 0 0 0 2px #fff, 0 0 5px 3px rgba(0,0,0,.25);
  color: #f00;
  font: bold 25px/29px "Liberation Sans", sans-serif;
  letter-spacing: -2px;
  text-align: center;
}
.n9 { left: 1097px; top: 209px; letter-spacing: 0; }
.n10 { left: 1079px; top: 290px; }
.n11 { left: 1308px; top: 395px; }
.n12 { left: 1297px; top: 194px; }
```
